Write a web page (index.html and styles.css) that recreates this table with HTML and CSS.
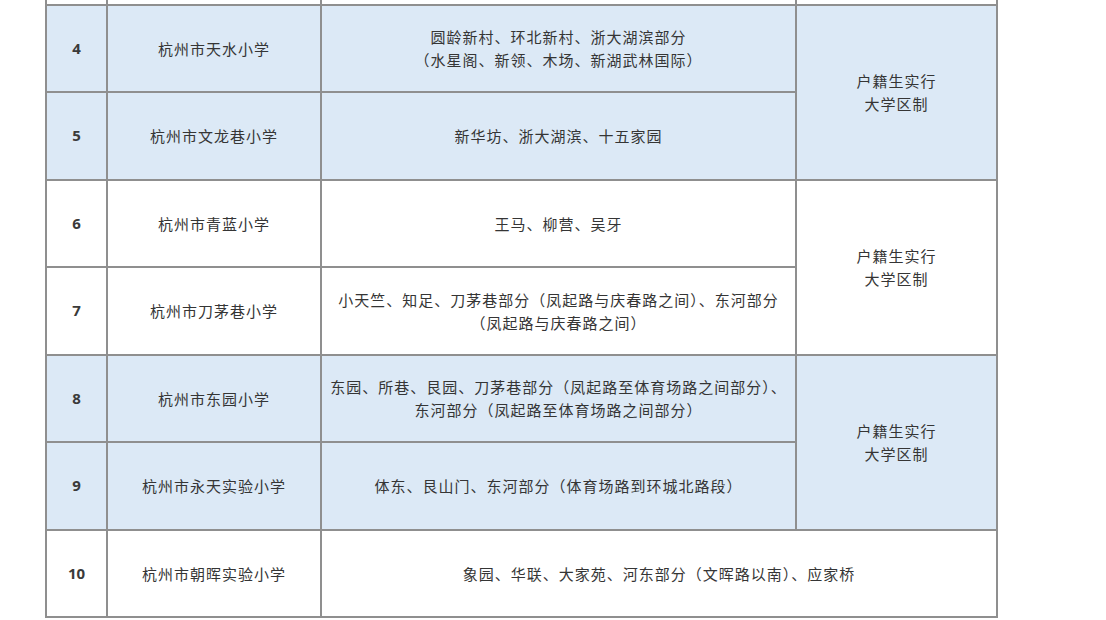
FILE: index.html
```html
<!DOCTYPE html>
<html lang="zh-CN">
<head>
<meta charset="utf-8">
<link rel="stylesheet" href="styles.css">
</head>
<body>
<div class="wrap">
<table class="grid">
  <colgroup>
    <col class="c-no"><col class="c-name"><col class="c-area"><col class="c-note">
  </colgroup>
  <tbody>
    <tr class="prev"><td></td><td></td><td></td><td></td></tr>
    <tr class="blue">
      <td class="no">4</td>
      <td>杭州市天水小学</td>
      <td>圆龄新村、环北新村、浙大湖滨部分<br>（水星阁、新领、木场、新湖武林国际）</td>
      <td rowspan="2">户籍生实行<br>大学区制</td>
    </tr>
    <tr class="blue">
      <td class="no">5</td>
      <td>杭州市文龙巷小学</td>
      <td>新华坊、浙大湖滨、十五家园</td>
    </tr>
    <tr>
      <td class="no">6</td>
      <td>杭州市青蓝小学</td>
      <td>王马、柳营、吴牙</td>
      <td rowspan="2">户籍生实行<br>大学区制</td>
    </tr>
    <tr>
      <td class="no">7</td>
      <td>杭州市刀茅巷小学</td>
      <td>小天竺、知足、刀茅巷部分（凤起路与庆春路之间）、东河部分<br>（凤起路与庆春路之间）</td>
    </tr>
    <tr class="blue">
      <td class="no">8</td>
      <td>杭州市东园小学</td>
      <td>东园、所巷、艮园、刀茅巷部分（凤起路至体育场路之间部分）、<br>东河部分（凤起路至体育场路之间部分）</td>
      <td rowspan="2">户籍生实行<br>大学区制</td>
    </tr>
    <tr class="blue">
      <td class="no">9</td>
      <td>杭州市永天实验小学</td>
      <td>体东、艮山门、东河部分（体育场路到环城北路段）</td>
    </tr>
    <tr>
      <td class="no">10</td>
      <td>杭州市朝晖实验小学</td>
      <td colspan="2">象园、华联、大家苑、河东部分（文晖路以南）、应家桥</td>
    </tr>
  </tbody>
</table>
</div>
</body>
</html>
```
FILE: styles.css
```css
html, body {
  margin: 0;
  padding: 0;
  background: #ffffff;
}
.wrap {
  width: 1106px;
  height: 620px;
  overflow: hidden;
  padding-left: 45px;
  box-sizing: border-box;
}
.grid {
  border-collapse: collapse;
  table-layout: fixed;
  width: 951px;
  margin-top: -36px;
  font-family: "Noto Sans CJK SC", "Noto Sans", sans-serif;
  font-size: 15px;
  letter-spacing: 1px;
  color: #353535;
}
.c-no { width: 61px; }
.c-name { width: 214px; }
.c-area { width: 475px; }
.c-note { width: 201px; }
.grid td {
  border: 2px solid #8f8f8f;
  text-align: center;
  vertical-align: middle;
  padding: 0;
  line-height: 23px;
  height: 85.5px;
}
.grid tr.prev td {
  height: 37.5px;
}
.grid tr.blue td {
  background: #dce9f6;
}
.grid td.no {
  font-family: "Noto Sans", "Liberation Sans", sans-serif;
  font-weight: 700;
  font-size: 15px;
  letter-spacing: 0;
  color: #3a3a3a;
}
```
